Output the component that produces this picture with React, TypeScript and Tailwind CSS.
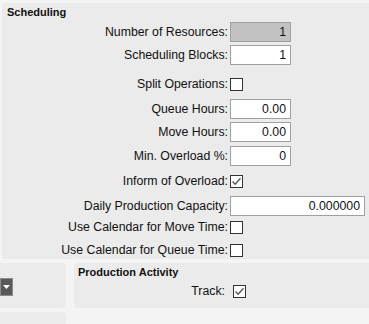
import React from 'react';

const font = { fontFamily: '"Liberation Sans", Arial, sans-serif' };

const Check = ({ checked = false }: { checked?: boolean }) => (
  <span className="flex h-[13px] w-[13px] items-center justify-center border border-[#333] bg-white">
    {checked && (
      <svg width="11" height="11" viewBox="0 0 11 11">
        <path d="M1.5 5.5 L4.2 8.3 L9.5 2.2" fill="none" stroke="#555" strokeWidth="1.3" />
      </svg>
    )}
  </span>
);

const Field = ({ value, wide = false, disabled = false }: { value: string; wide?: boolean; disabled?: boolean }) => (
  <div
    className={`flex h-[20px] items-center justify-end border border-[#a0a0a0] pr-[4px] text-[12.3px] text-[#111] ${
      wide ? 'w-[135px]' : 'w-[61px]'
    } ${disabled ? 'bg-[#c2c2c2]' : 'bg-white'}`}
  >
    {value}
  </div>
);

type Row = { label: string; mt: string; control: React.ReactNode };

const rows: Row[] = [
  { label: 'Number of Resources:', mt: 'mt-[2px]', control: <Field value="1" disabled /> },
  { label: 'Scheduling Blocks:', mt: 'mt-[3px]', control: <Field value="1" /> },
  { label: 'Split Operations:', mt: 'mt-[12px]', control: <Check /> },
  { label: 'Queue Hours:', mt: 'mt-[8px]', control: <Field value="0.00" /> },
  { label: 'Move Hours:', mt: 'mt-[3px]', control: <Field value="0.00" /> },
  { label: 'Min. Overload %:', mt: 'mt-[4px]', control: <Field value="0" /> },
  { label: 'Inform of Overload:', mt: 'mt-[8px]', control: <Check checked /> },
  { label: 'Daily Production Capacity:', mt: 'mt-[8px]', control: <Field value="0.000000" wide /> },
  { label: 'Use Calendar for Move Time:', mt: 'mt-[4px]', control: <Check /> },
  { label: 'Use Calendar for Queue Time:', mt: 'mt-[9px]', control: <Check /> },
];

export default function App() {
  return (
    <div className="h-[324px] w-[369px] overflow-hidden bg-[#f4f4f5] text-[#111]" style={font}>
      <div className="ml-[2px] -mr-2 mt-[3px] h-[256px] rounded-[4px] bg-[#ebebeb]">
        <div className="h-[17px] pl-[5px] pt-[2px] text-[11px] font-bold leading-[15px]">Scheduling</div>
        {rows.map(r => (
          <div key={r.label} className={`flex items-center ${r.mt}`}>
            <div className="w-[226px] text-right text-[12.3px] leading-[14px]">{r.label}</div>
            <div className="ml-[2px]">{r.control}</div>
          </div>
        ))}
      </div>

      <div className="mt-[4px] flex gap-[8px]">
        <div className="flex w-[66px] flex-col gap-[4px]">
          <div className="-ml-2 flex h-[45px] items-center rounded-[4px] bg-[#ebebeb] pl-2">
            <div className="mt-[2px] flex h-[18px] w-[13px] items-center justify-center border border-[#8c8c8c] bg-[#595959]">
              <svg width="7" height="4" viewBox="0 0 7 4">
                <path d="M0 0 H7 L3.5 4 Z" fill="#fff" />
              </svg>
            </div>
          </div>
          <div className="-ml-2 h-[20px] rounded-[4px] bg-[#ebebeb]" />
        </div>
        <div className="-mr-2 h-[45px] flex-1 rounded-[4px] bg-[#ebebeb]">
          <div className="pl-[4px] pt-[2px] text-[11px] font-bold leading-[15px]">Production Activity</div>
          <div className="mt-[4px] flex items-center">
            <div className="w-[151px] text-right text-[12.3px] leading-[14px]">Track:</div>
            <div className="ml-[8px]">
              <Check checked />
            </div>
          </div>
        </div>
      </div>
    </div>
  );
}
